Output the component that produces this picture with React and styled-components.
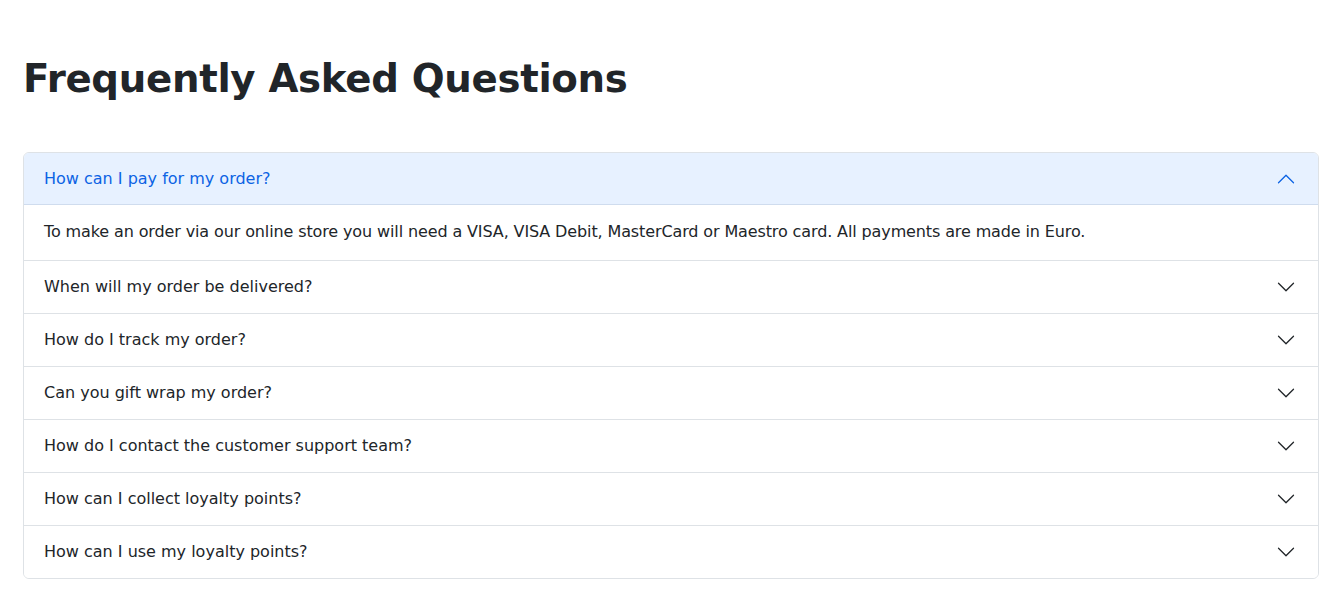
import React, { useState } from "react";
import styled, { createGlobalStyle } from "styled-components";

const GlobalStyle = createGlobalStyle`
  body {
    margin: 0;
    background: #fff;
    font-family: "DejaVu Sans", "Noto Sans", sans-serif;
    color: #212529;
  }
`;

const faqs = [
  {
    q: "How can I pay for my order?",
    a: "To make an order via our online store you will need a VISA, VISA Debit, MasterCard or Maestro card. All payments are made in Euro.",
  },
  { q: "When will my order be delivered?", a: "" },
  { q: "How do I track my order?", a: "" },
  { q: "Can you gift wrap my order?", a: "" },
  { q: "How do I contact the customer support team?", a: "" },
  { q: "How can I collect loyalty points?", a: "" },
  { q: "How can I use my loyalty points?", a: "" },
];

const Page = styled.main`
  padding: 55px 19px 28px 23px;
`;

const Title = styled.h1`
  margin: 0 0 49px;
  font-family: "DejaVu Sans", sans-serif;
  font-weight: 800;
  font-size: 38.7px;
  line-height: 48px;
  letter-spacing: -0.3px;
  color: #212529;
`;

const Accordion = styled.div`
  border: 1px solid #dee2e6;
  border-radius: 6px;
  overflow: hidden;
`;

const Item = styled.div`
  & + & {
    border-top: 1px solid #dee2e6;
  }
`;

const Header = styled.button`
  display: flex;
  align-items: center;
  justify-content: space-between;
  width: 100%;
  padding: 14px 22px 14px 20px;
  border: 0;
  box-shadow: ${(p) => (p.$open ? "inset 0 -1px 0 #cfdcee" : "none")};
  background: ${(p) => (p.$open ? "#e7f1ff" : "#fff")};
  color: ${(p) => (p.$open ? "#0c63e4" : "#212529")};
  font-family: inherit;
  font-size: 16px;
  line-height: 24px;
  text-align: left;
  cursor: pointer;
`;

const Chevron = styled.svg`
  width: 20px;
  height: 20px;
  flex-shrink: 0;
  transform: ${(p) => (p.$open ? "rotate(-180deg)" : "none")};
  fill: currentColor;
`;

const Body = styled.div`
  padding: 15px 20px 16px;
  font-size: 16px;
  line-height: 24px;
  letter-spacing: -0.12px;
`;

function FaqItem({ item, open, onToggle }) {
  return (
    <Item>
      <Header $open={open} onClick={onToggle}>
        <span>{item.q}</span>
        <Chevron $open={open} viewBox="0 0 16 16">
          <path d="M1.646 4.646a.5.5 0 0 1 .708 0L8 10.293l5.646-5.647a.5.5 0 0 1 .708.708l-6 6a.5.5 0 0 1-.708 0l-6-6a.5.5 0 0 1 0-.708z" />
        </Chevron>
      </Header>
      {open && <Body>{item.a}</Body>}
    </Item>
  );
}

export default function App() {
  const [openIndex, setOpenIndex] = useState(0);

  return (
    <>
      <GlobalStyle />
      <Page>
        <Title>Frequently Asked Questions</Title>
        <Accordion>
          {faqs.map((item, i) => (
            <FaqItem
              key={item.q}
              item={item}
              open={openIndex === i}
              onToggle={() => setOpenIndex(openIndex === i ? -1 : i)}
            />
          ))}
        </Accordion>
      </Page>
    </>
  );
}
